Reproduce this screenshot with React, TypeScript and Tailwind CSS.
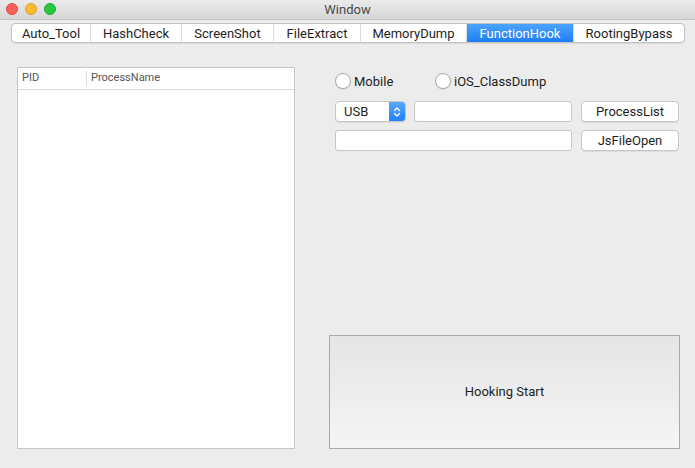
import React from 'react';

const tabs = [
    { label: 'Auto_Tool', w: 'w-[78px]' },
    { label: 'HashCheck', w: 'w-[91px]' },
    { label: 'ScreenShot', w: 'w-[92px]' },
    { label: 'FileExtract', w: 'w-[87px]' },
    { label: 'MemoryDump', w: 'w-[106px]' },
    { label: 'FunctionHook', w: 'w-[107px]' },
    { label: 'RootingBypass', w: 'flex-1' },
];

const Radio: React.FC<{ label: string; className?: string }> = ({ label, className = '' }) => (
    <label className={`flex items-center gap-[3px] h-[16px] ${className}`}>
        <span className="w-[16px] h-[16px] shrink-0 rounded-full border border-[#a9a9a9] bg-white shadow-[0_1px_1px_rgba(0,0,0,0.08)]" />
        <span className="text-[13px] leading-none text-[#1e1e1e]">{label}</span>
    </label>
);

const PushButton: React.FC<{ label: string }> = ({ label }) => (
    <button className="block w-[98px] h-[21px] rounded-[4px] bg-white border border-[#c6c6c6] shadow-[0_1px_0_rgba(0,0,0,0.06)] text-[13px] text-[#1e1e1e] leading-none">
        {label}
    </button>
);

const App: React.FC = () => {
    return (
        <div className="w-[695px] h-[468px] bg-[#ececec] flex flex-col overflow-hidden" style={{ fontFamily: 'Roboto, "Liberation Sans", sans-serif' }}>
            {/* title bar */}
            <div className="relative h-[20px] shrink-0 bg-gradient-to-b from-[#ebebeb] to-[#d6d6d6] border-b border-[#c2c2c2] flex items-center justify-center">
                <div className="absolute left-[6px] top-[3px] flex gap-[7px]">
                    <span className="w-[12px] h-[12px] rounded-full bg-[#fc5f57] border border-[#df4a43]" />
                    <span className="w-[12px] h-[12px] rounded-full bg-[#fdbc2e] border border-[#de9f25]" />
                    <span className="w-[12px] h-[12px] rounded-full bg-[#28c840] border border-[#1fab2f]" />
                </div>
                <span className="text-[13px] text-[#4a4a4a]">Window</span>
            </div>

            {/* tab bar */}
            <div className="ml-[11px] mt-[3px] w-[674px] h-[20px] shrink-0 flex bg-white border border-[#c3c3c3] rounded-[4px] overflow-hidden shadow-[0_1px_1px_rgba(0,0,0,0.08)]">
                {tabs.map((t, i) => {
                    const active = t.label === 'FunctionHook';
                    return (
                        <div
                            key={t.label}
                            className={`${t.w} flex items-center justify-center text-[13px] leading-none ${i > 0 ? 'border-l border-[#dcdcdc]' : ''} ${active ? 'bg-gradient-to-b from-[#4aa3fc] to-[#1c7ff6] text-white' : 'text-[#1e1e1e]'}`}
                        >
                            {t.label}
                        </div>
                    );
                })}
            </div>

            {/* content */}
            <div className="flex mt-[24px]">
                <div className="ml-[17px] w-[278px] h-[382px] bg-white border border-[#c6c6c6] flex flex-col">
                    <div className="h-[22px] flex items-center border-b border-[#dcdcdc] text-[11px] text-[#555]">
                        <div className="w-[69px] pl-[4px] h-[16px] flex items-center border-r border-[#dcdcdc]">PID</div>
                        <div className="pl-[4px]">ProcessName</div>
                    </div>
                </div>

                <div className="ml-[34px] w-[351px] h-[382px] flex flex-col">
                    <div className="ml-[6px] mt-[6px] h-[16px] flex">
                        <Radio label="Mobile" className="w-[100px]" />
                        <Radio label="iOS_ClassDump" />
                    </div>

                    <div className="ml-[6px] mt-[12px] h-[21px] flex items-center">
                        <div className="w-[71px] h-[21px] flex rounded-[4px] bg-white border border-[#c6c6c6] overflow-hidden shadow-[0_1px_0_rgba(0,0,0,0.06)]">
                            <span className="flex-1 pl-[8px] flex items-center text-[13px] leading-none text-[#1e1e1e]">USB</span>
                            <span className="w-[16px] bg-gradient-to-b from-[#58a8fc] to-[#1f81f6] flex items-center justify-center">
                                <svg width="8" height="12" viewBox="0 0 8 12" fill="none" stroke="white" strokeWidth="1.3" strokeLinecap="round" strokeLinejoin="round">
                                    <path d="M1.5 4.5 L4 2 L6.5 4.5" />
                                    <path d="M1.5 7.5 L4 10 L6.5 7.5" />
                                </svg>
                            </span>
                        </div>
                        <div className="ml-[8px] w-[158px] h-[21px] bg-white border border-[#c6c6c6] rounded-[3px]" />
                        <div className="ml-[9px] flex"><PushButton label="ProcessList" /></div>
                    </div>

                    <div className="ml-[6px] mt-[8px] h-[21px] flex items-center">
                        <div className="w-[237px] h-[21px] bg-white border border-[#c6c6c6] rounded-[3px]" />
                        <div className="ml-[9px] flex"><PushButton label="JsFileOpen" /></div>
                    </div>

                    <button className="mt-auto w-[351px] h-[114px] border border-[#a9a9a9] bg-gradient-to-b from-[#e5e5e5] to-[#f5f5f5] text-[13px] text-[#1e1e1e]">
                        Hooking Start
                    </button>
                </div>
            </div>
        </div>
    );
};

export default App;
